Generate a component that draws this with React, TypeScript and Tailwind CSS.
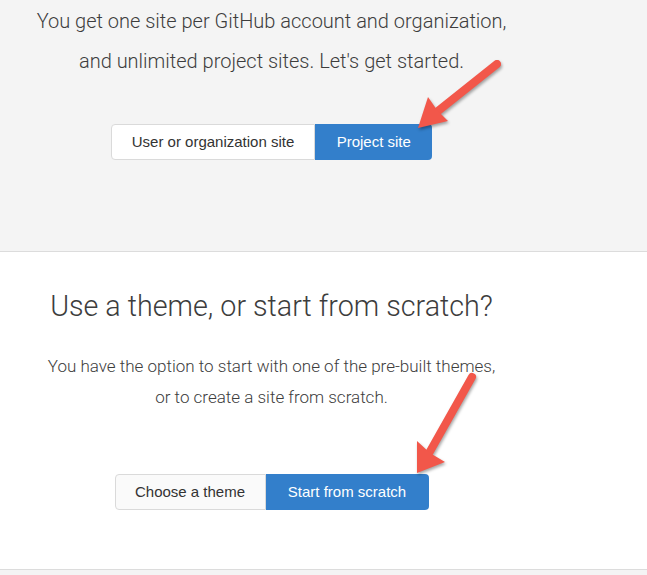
import React from "react";

const light = { fontFamily: "Roboto, 'Liberation Sans', sans-serif" };

function Arrow({ tail, tip, head }: { tail: string; tip: string; head: string }) {
  return (
    <g>
      <path d={`M${tail} L${tip}`} stroke="#f2574a" strokeWidth="8" strokeLinecap="round" fill="none" />
      <polygon points={head} fill="#f2574a" />
    </g>
  );
}

export default function App() {
  return (
    <div className="relative w-[647px] h-[575px] overflow-hidden bg-[#f4f4f4] text-[#333]" style={{ fontFamily: "'Liberation Sans', Arial, sans-serif" }}>
      <section className="h-[252px] border-b border-[#dcdcdc] bg-[#f4f4f4]">
        <div className="w-[543px] text-center pt-px">
          <p className="text-[20px] leading-[40px] font-light text-[#3d3d3d]" style={light}>
            You get one site per GitHub account and organization,
            <br />
            and unlimited project sites. Let's get started.
          </p>
          <div className="mt-[43px] inline-flex">
            <button className="h-9 px-5 text-[15px] bg-white border border-[#dadada] rounded-l-[4px] text-[#333]">
              User or organization site
            </button>
            <button className="h-9 w-[117px] text-[15px] bg-[#337fcb] text-white rounded-r-[4px]">
              Project site
            </button>
          </div>
        </div>
      </section>

      <section className="h-[318px] border-b border-[#dcdcdc] bg-white">
        <div className="w-[543px] text-center">
          <h2 className="pt-9 text-[28.7px] leading-[36px] font-light text-[#3d3d3d]" style={light}>
            Use a theme, or start from scratch?
          </h2>
          <p className="mt-[27px] text-[17px] leading-[31px] font-light text-[#3d3d3d]" style={light}>
            You have the option to start with one of the pre-built themes,
            <br />
            or to create a site from scratch.
          </p>
          <div className="mt-[61px] inline-flex">
            <button className="h-9 w-[151px] text-[15px] bg-[#fafafa] border border-[#dadada] rounded-l-[4px] text-[#333]">
              Choose a theme
            </button>
            <button className="h-9 w-[163px] text-[15px] bg-[#337fcb] text-white rounded-r-[4px]">
              Start from scratch
            </button>
          </div>
        </div>
      </section>

      <svg className="absolute inset-0 pointer-events-none" width="647" height="575" style={{ filter: "drop-shadow(1px 2px 1.5px rgba(0,0,0,0.35))" }}>
        <Arrow tail="497,64" tip="433,115" head="418,128 428,97 437,110 448,121" />
        <Arrow tail="472,377" tip="428,455" head="417,473 417,441 430,453 445,462" />
      </svg>
    </div>
  );
}
